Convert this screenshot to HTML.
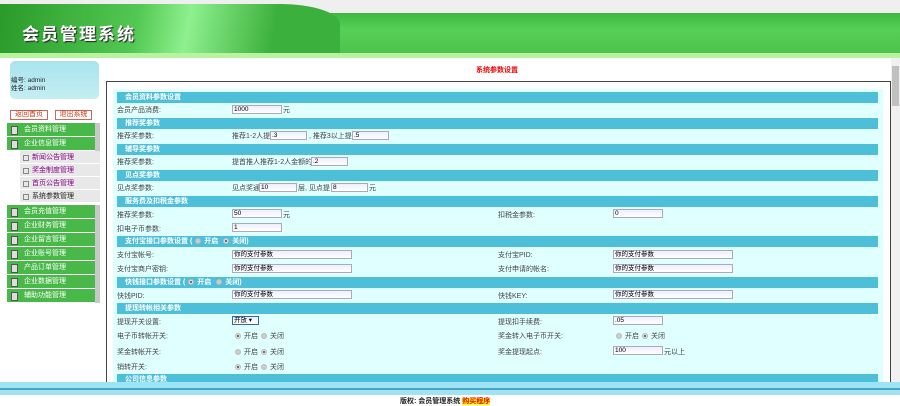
<!DOCTYPE html>
<html><head><meta charset="utf-8"><style>
*{margin:0;padding:0;box-sizing:border-box}
body{width:900px;height:405px;overflow:hidden;background:#fff;font-family:"Liberation Sans","Noto Sans CJK SC",sans-serif;font-size:7px;color:#444;position:relative}
.a{position:absolute;white-space:nowrap}
.hd{position:absolute;left:0;top:0;width:900px;height:58px;background:#efefef}
.g{position:absolute;left:0;top:13px;width:900px;height:41px;background:linear-gradient(180deg,#3cb83c,#58d058 40%,#4cc44c)}
.g2{position:absolute;left:0;top:4px;width:340px;height:50px;border-top-right-radius:60px 20px;background:linear-gradient(100deg,#2a9a2a 0%,#52c852 40%,#8ef08e 55%,#3cb03c 80%)}
.sl{position:absolute;left:0;top:53px;width:900px;height:5px;background:#b8f4a0}
.ttl{position:absolute;left:22px;top:20px;font-size:17px;font-weight:bold;color:#fff;letter-spacing:2px;text-shadow:1px 1px 1px #222}
.menu{position:absolute;left:7px;width:88px;height:14px;background:#48b848;color:#fff;border-bottom:1px solid #fff;padding-left:17px;line-height:13px}
.menu:before{content:"";position:absolute;left:4px;top:3px;width:5px;height:7px;background:#ddd;border:1px solid #555}
.mg{position:absolute;left:95px;width:5px;height:14px;background:#c8c8c8}
.sub{position:absolute;left:20px;width:80px;height:13px;background:#e8e8e8;color:#808;padding-left:12px;line-height:13px;border-bottom:1px solid #fff}
.sub:before{content:"";position:absolute;left:3px;top:4px;width:4px;height:4px;border:1px solid #888}
.bar{position:absolute;left:117px;width:761px;height:11px;background:#4ebfd9;color:#fff;font-weight:bold;padding-left:8px;line-height:11px}
.in{position:absolute;height:9px;background:linear-gradient(#eef,#fff);border:1px solid #aab;font-size:6.5px;line-height:7px;padding-left:1px;color:#000}
.r{display:inline-block;width:6px;height:6px;border-radius:50%;background:#ccc;border:1px solid #bbb;vertical-align:middle;margin:0 3px}
.r.on{background:radial-gradient(#555 30%,#ddd 40%)}
</style></head><body>
<div class="hd"><div class="g"></div><div class="g2"></div><div class="sl"></div><div class="ttl">会员管理系统</div></div>

<div class="a" style="left:10px;top:61px;width:89px;height:38px;background:linear-gradient(#a8e4ee,#c4eef2);border-radius:5px"></div>
<div class="a" style="left:11px;top:77px;font-size:6.5px;color:#222;line-height:8px">编号: admin<br>姓名: admin</div>
<div class="a" style="left:10px;top:110px;width:38px;height:10px;border:1px solid #c66;color:#c30;text-align:center;line-height:8px">返回首页</div>
<div class="a" style="left:55px;top:110px;width:37px;height:10px;border:1px solid #c66;color:#c30;text-align:center;line-height:8px">退出系统</div>

<div class="menu a" style="top:123px">会员资料管理</div><div class="mg" style="top:123px"></div>
<div class="menu a" style="top:137px">企业信息管理</div><div class="mg" style="top:137px"></div>
<div class="sub a" style="top:151px">新闻公告管理</div>
<div class="sub a" style="top:164px">奖金制度管理</div>
<div class="sub a" style="top:177px">首页公告管理</div>
<div class="sub a" style="top:190px;color:#222">系统参数管理</div>
<div class="menu a" style="top:205px">会员充值管理</div><div class="mg" style="top:205px"></div>
<div class="menu a" style="top:219px">企业财务管理</div><div class="mg" style="top:219px"></div>
<div class="menu a" style="top:233px">企业留言管理</div><div class="mg" style="top:233px"></div>
<div class="menu a" style="top:247px">企业账号管理</div><div class="mg" style="top:247px"></div>
<div class="menu a" style="top:261px">产品订单管理</div><div class="mg" style="top:261px"></div>
<div class="menu a" style="top:275px">企业数据管理</div><div class="mg" style="top:275px"></div>
<div class="menu a" style="top:289px">辅助功能管理</div><div class="mg" style="top:289px"></div>

<div class="a" style="left:476px;top:65px;color:#e00;font-weight:bold">系统参数设置</div>
<div class="a" style="left:106px;top:81px;width:785px;height:310px;border:1px solid #444;border-bottom:none"></div>
<div class="a" style="left:891px;top:58px;width:9px;height:325px;background:#f0f0f0"></div>
<div class="a" style="left:892px;top:66px;width:7px;height:40px;background:#c0c0c0"></div>
<div class="a" style="left:113px;top:89px;width:770px;height:294px;background:#e0ffff"></div>

<div class="bar" style="top:92px">会员资料参数设置</div>
<div class="a" style="left:117px;top:105px">会员产品消费:</div><div class="in" style="left:232px;top:105px;width:50px">1000</div><div class="a" style="left:283px;top:105px">元</div>
<div class="bar" style="top:118px">推荐奖参数</div>
<div class="a" style="left:117px;top:131px">推荐奖参数:</div><div class="a" style="left:232px;top:131px">推荐1-2人提</div><div class="in" style="left:270px;top:131px;width:37px">.3</div><div class="a" style="left:309px;top:131px">, 推荐3以上提</div><div class="in" style="left:352px;top:131px;width:37px">.5</div>
<div class="bar" style="top:144px">辅导奖参数</div>
<div class="a" style="left:117px;top:157px">推荐奖参数:</div><div class="a" style="left:232px;top:157px">提首推人推荐1-2人金额的</div><div class="in" style="left:311px;top:157px;width:37px">.2</div>
<div class="bar" style="top:170px">见点奖参数</div>
<div class="a" style="left:117px;top:183px">见点奖参数:</div><div class="a" style="left:232px;top:183px">见点奖通</div><div class="in" style="left:259px;top:183px;width:38px">10</div><div class="a" style="left:298px;top:183px">层, 见点提</div><div class="in" style="left:331px;top:183px;width:37px">8</div><div class="a" style="left:369px;top:183px">元</div>
<div class="bar" style="top:196px">服务费及扣税金参数</div>
<div class="a" style="left:117px;top:210px">推荐奖参数:</div><div class="in" style="left:232px;top:209px;width:50px">50</div><div class="a" style="left:283px;top:210px">元</div>
<div class="a" style="left:498px;top:210px">扣税金参数:</div><div class="in" style="left:613px;top:209px;width:50px">0</div>
<div class="a" style="left:117px;top:224px">扣电子币参数:</div><div class="in" style="left:232px;top:223px;width:50px">1</div>
<div class="bar" style="top:236px">支付宝接口参数设置 (<span class="r"></span>开启 <span class="r on"></span>关闭)</div>
<div class="a" style="left:117px;top:250px">支付宝帐号:</div><div class="in" style="left:232px;top:250px;width:120px">你的支付参数</div>
<div class="a" style="left:498px;top:250px">支付宝PID:</div><div class="in" style="left:613px;top:250px;width:120px">你的支付参数</div>
<div class="a" style="left:117px;top:264px">支付宝商户密钥:</div><div class="in" style="left:232px;top:264px;width:120px">你的支付参数</div>
<div class="a" style="left:498px;top:264px">支付申请的帐名:</div><div class="in" style="left:613px;top:264px;width:120px">你的支付参数</div>
<div class="bar" style="top:277px">快钱接口参数设置 (<span class="r on"></span>开启 <span class="r"></span>关闭)</div>
<div class="a" style="left:117px;top:291px">快钱PID:</div><div class="in" style="left:232px;top:290px;width:120px">你的支付参数</div>
<div class="a" style="left:498px;top:291px">快钱KEY:</div><div class="in" style="left:613px;top:290px;width:120px">你的支付参数</div>
<div class="bar" style="top:303px">提现转帐相关参数</div>
<div class="a" style="left:117px;top:317px">提现开关设置:</div><div class="in" style="left:232px;top:316px;width:27px;border-color:#36a">开放 ▾</div>
<div class="a" style="left:498px;top:317px">提现扣手续费:</div><div class="in" style="left:613px;top:316px;width:50px">.05</div>
<div class="a" style="left:117px;top:331px">电子币转帐开关:</div><div class="a" style="left:232px;top:331px"><span class="r on"></span>开启<span class="r"></span>关闭</div>
<div class="a" style="left:498px;top:331px">奖金转入电子币开关:</div><div class="a" style="left:613px;top:331px"><span class="r"></span>开启<span class="r on"></span>关闭</div>
<div class="a" style="left:117px;top:347px">奖金转帐开关:</div><div class="a" style="left:232px;top:347px"><span class="r"></span>开启<span class="r on"></span>关闭</div>
<div class="a" style="left:498px;top:347px">奖金提现起点:</div><div class="in" style="left:613px;top:346px;width:50px">100</div><div class="a" style="left:664px;top:347px">元以上</div>
<div class="a" style="left:117px;top:362px">销转开关:</div><div class="a" style="left:232px;top:362px"><span class="r on"></span>开启<span class="r"></span>关闭</div>
<div class="bar" style="top:374px;height:9px">公司信息参数</div>

<div class="a" style="left:0;top:382px;width:900px;height:13px;background:#9ee4f4"></div>
<div class="a" style="left:0;top:388px;width:900px;height:2px;background:#40a8c8"></div>
<div class="a" style="left:0;top:390px;width:900px;height:3px;background:#a8e0f0"></div>
<div class="a" style="left:400px;top:396px;font-weight:bold;color:#222">版权: 会员管理系统 <span style="background:#ff0;color:#e00">购买程序</span></div>
</body></html>
